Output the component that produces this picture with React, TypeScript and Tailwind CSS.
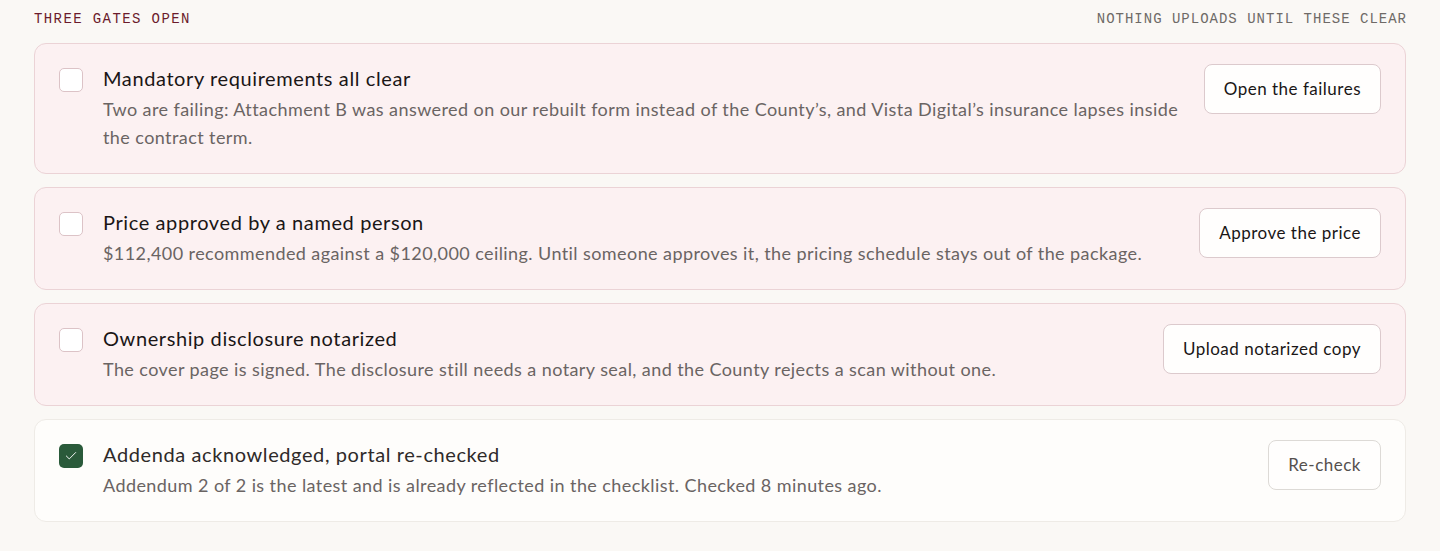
import { Check } from 'lucide-react';

type Gate = {
    title: string;
    detail: string;
    action: string;
    done: boolean;
};

const gates: Gate[] = [
    {
        title: 'Mandatory requirements all clear',
        detail: 'Two are failing: Attachment B was answered on our rebuilt form instead of the County\u2019s, and Vista Digital\u2019s insurance lapses inside the contract term.',
        action: 'Open the failures',
        done: false,
    },
    {
        title: 'Price approved by a named person',
        detail: '$112,400 recommended against a $120,000 ceiling. Until someone approves it, the pricing schedule stays out of the package.',
        action: 'Approve the price',
        done: false,
    },
    {
        title: 'Ownership disclosure notarized',
        detail: 'The cover page is signed. The disclosure still needs a notary seal, and the County rejects a scan without one.',
        action: 'Upload notarized copy',
        done: false,
    },
    {
        title: 'Addenda acknowledged, portal re-checked',
        detail: 'Addendum 2 of 2 is the latest and is already reflected in the checklist. Checked 8 minutes ago.',
        action: 'Re-check',
        done: true,
    },
];

function GateRow({ gate }: { gate: Gate }) {
    const shell = gate.done
        ? 'bg-[#fefdfb] border-[#eeebe6]'
        : 'bg-[#fcf1f2] border-[#ebd3d6]';

    return (
        <div className={`flex items-start gap-5 rounded-xl border pl-6 pr-6 pt-[20px] pb-[22px] ${shell}`}>
            {/* Checkbox */}
            <div className="pt-[4px]">
                {gate.done ? (
                    <div className="w-6 h-6 rounded-[5px] bg-[#2a5a3a] flex items-center justify-center">
                        <Check className="w-3.5 h-3.5 text-white" strokeWidth={1.6} />
                    </div>
                ) : (
                    <div className="w-6 h-6 rounded-[5px] border border-[#dcc3c7] bg-white" />
                )}
            </div>

            {/* Text */}
            <div className="flex-1 min-w-0 -mr-2">
                <div className={`text-[20px] leading-[28px] tracking-[0.6px] ${gate.done ? 'text-[#2e2a29]' : 'text-[#1a1616]'}`}>
                    {gate.title}
                </div>
                <p className="mt-[3px] text-[18px] leading-[28px] tracking-[0.42px] text-[#6a6463]">
                    {gate.detail}
                </p>
            </div>

            {/* Action */}
            <button
                className={`shrink-0 h-[50px] px-[19px] rounded-lg border bg-[#fffefd] text-[17px] tracking-[0.5px] ${
                    gate.done ? 'border-[#dddad6] text-[#55504e]' : 'border-[#dccacd] text-[#1a1616]'
                }`}
            >
                {gate.action}
            </button>
        </div>
    );
}

export default function App() {
    return (
        <div
            className="min-h-screen bg-[#faf8f5] px-[34px] pt-[9px] pb-7"
            style={{ fontFamily: 'Lato, "Noto Sans", sans-serif' }}
        >
            {/* Header */}
            <div className="flex items-center justify-between h-[20px] mb-[14px]" style={{ fontFamily: '"Liberation Mono", monospace' }}>
                <span className="text-[14px] tracking-[1.4px] text-[#6b1b2c]">THREE GATES OPEN</span>
                <span className="text-[14px] tracking-[1px] text-[#6e6a67] -mr-[1px]">NOTHING UPLOADS UNTIL THESE CLEAR</span>
            </div>

            {/* Gates */}
            <div className="flex flex-col gap-[13px]">
                {gates.map(g => (
                    <GateRow key={g.title} gate={g} />
                ))}
            </div>
        </div>
    );
}
